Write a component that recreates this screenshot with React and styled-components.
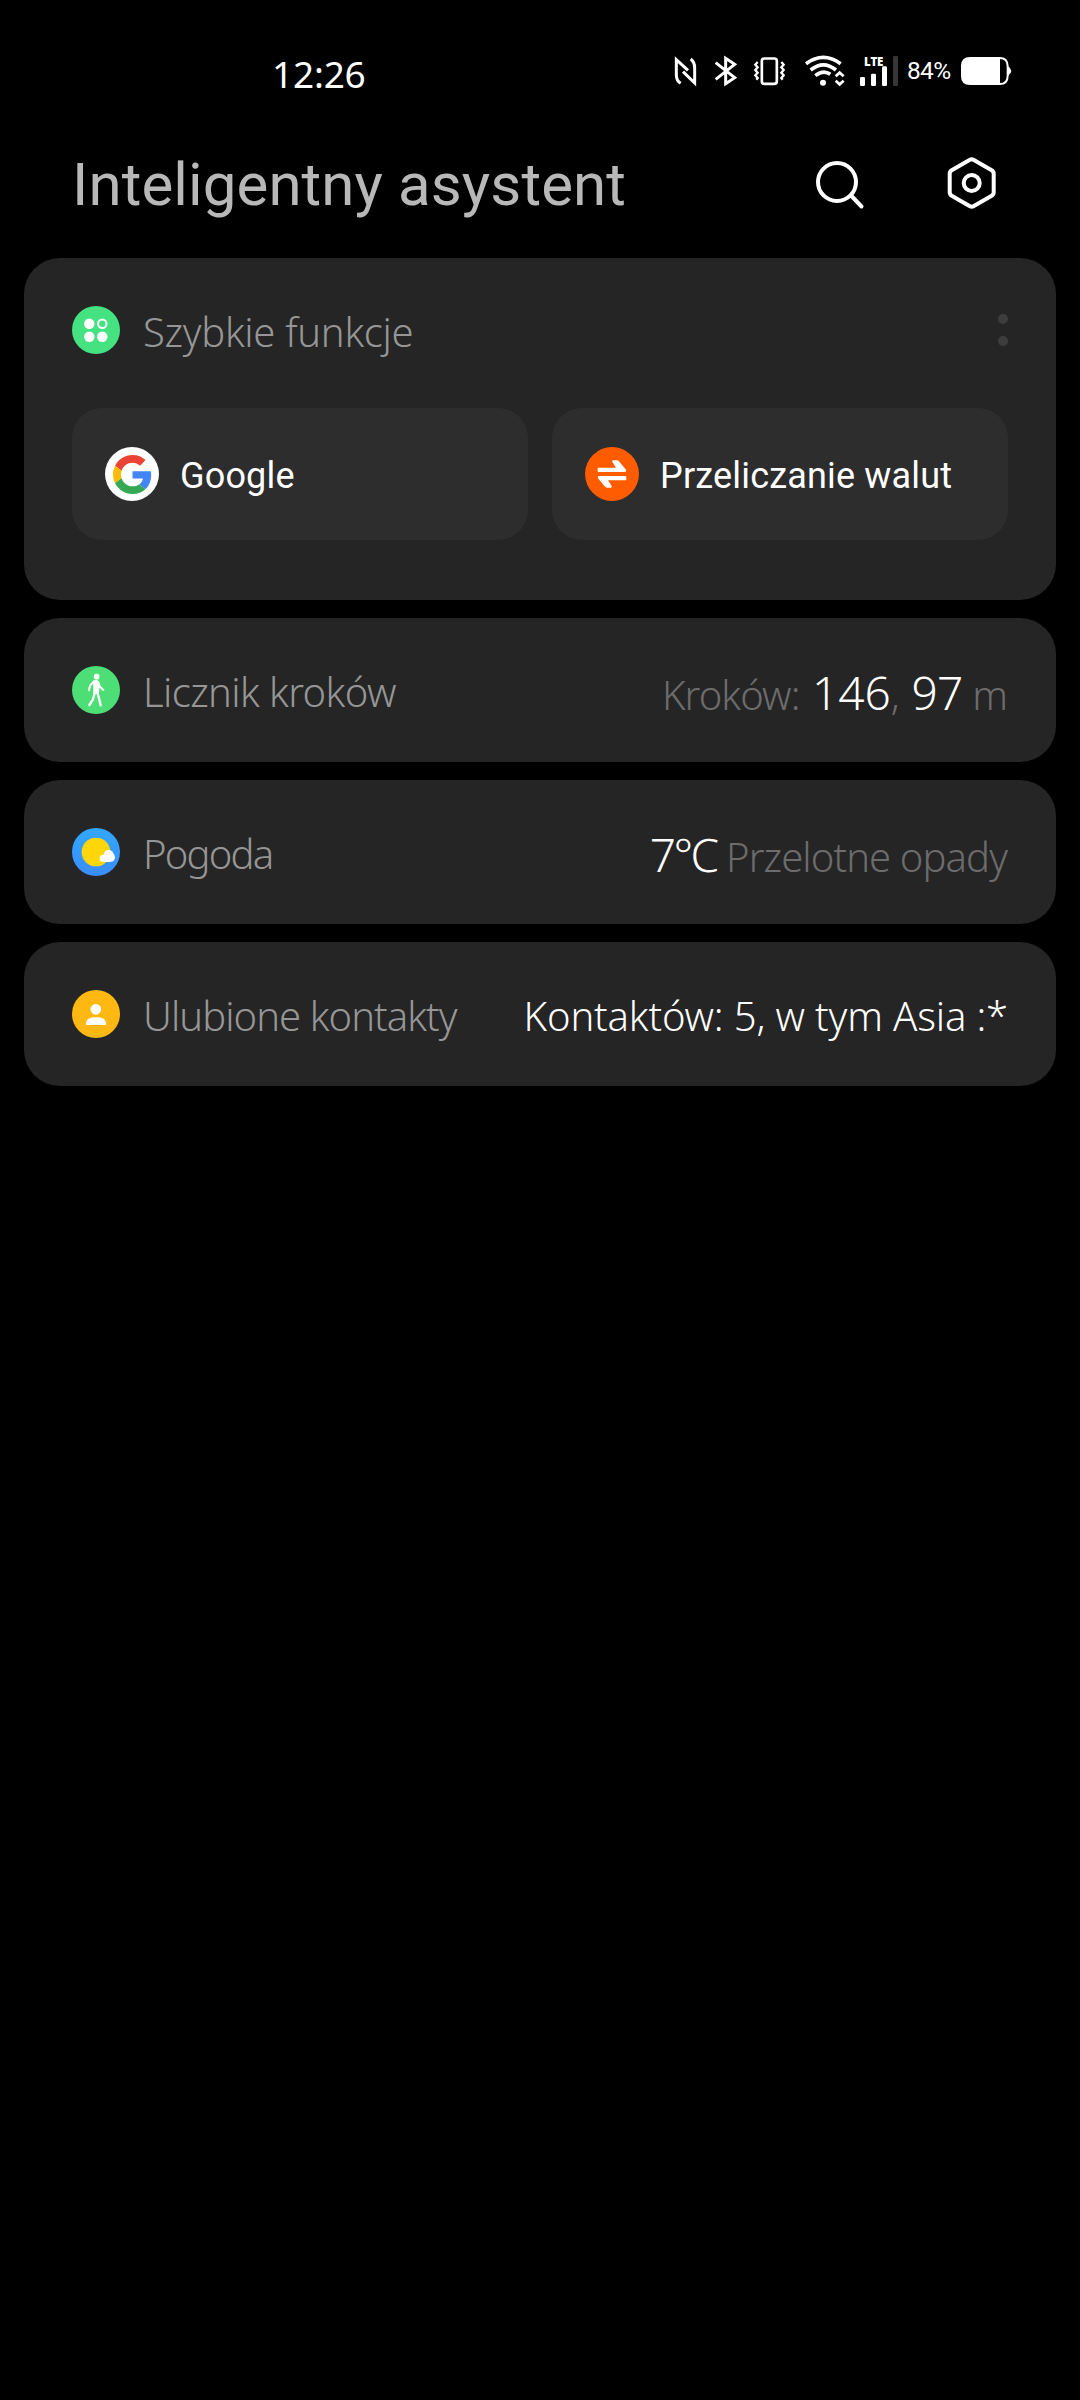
import React from 'react'
import styled, {createGlobalStyle} from 'styled-components'

const GlobalStyle = createGlobalStyle`
    * {
        box-sizing: border-box;
    }

    body {
        margin: 0;
        background: #000;
    }

    svg {
        display: block;
        flex: none;
    }
`;

const Screen = styled.div`
    width: 1080px;
    min-height: 2400px;
    padding: 0 24px;
    background: #000;
    color: #fff;
    font-family: "Noto Sans", sans-serif;
    white-space: nowrap;
`;

const StatusBar = styled.div`
    display: flex;
    align-items: center;
    justify-content: space-between;
    height: 142px;
    padding: 0 44px 0 248px;
`;

const Clock = styled.div`
    padding-top: 5px;
    font-size: 37px;
    line-height: 44px;
    letter-spacing: -0.2px;
`;

const StatusIcons = styled.div`
    display: flex;
    align-items: center;
`;

const StatusIcon = styled.svg.attrs(({w}) => ({
    width: w / 3,
    height: 32,
    viewBox: `0 0 ${w} 96`
}))`
    margin-left: ${({gap}) => gap}px;
    fill: none;
    stroke: #fff;
    stroke-width: 9;
`;

const Signal = styled.div`
    position: relative;
    margin-left: 13px;
`;

const NetworkType = styled.span`
    position: absolute;
    top: 1px;
    left: 5px;
    font: 800 11.5px/12px "Open Sans", sans-serif;
    letter-spacing: -0.2px;
`;

const BatteryLevel = styled.span`
    width: 44px;
    margin-left: 8px;
    font: 400 24.5px/32px Roboto, sans-serif;
    letter-spacing: -0.7px;
`;

const Header = styled.header`
    display: flex;
    align-items: center;
    justify-content: space-between;
    height: 84px;
    margin-bottom: 32px;
    padding: 0 52px 0 48px;
`;

const Title = styled.h1`
    margin: 0;
    padding-top: 2px;
    color: #b8b8b8;
    font: 400 60px/70px Roboto, sans-serif;
    letter-spacing: 0.1px;
`;

const Actions = styled.div`
    display: flex;
    gap: 68px;
`;

const ActionIcon = styled.svg`
    width: 64px;
    height: 64px;
    fill: none;
    stroke: #fff;
    stroke-width: 4;
    stroke-linecap: round;
    stroke-linejoin: round;
`;

const Cards = styled.main`
    display: flex;
    flex-direction: column;
    gap: 18px;
`;

const Card = styled.section`
    padding: ${({tall}) => tall ? '48px 48px 60px' : '48px'};
    border-radius: 36px;
    background: #252525;
`;

const CardRow = styled.div`
    display: flex;
    align-items: center;
    height: 48px;
`;

const CardIcon = styled.svg`
    width: 48px;
    height: 48px;
`;

const Label = styled.div`
    flex: 1;
    margin-left: 23px;
    padding-top: 3px;
    color: #969696;
    font-size: 40px;
    font-weight: 350;
    line-height: 48px;
    letter-spacing: ${({spacing}) => spacing || 0}px;
`;

const Value = styled.div`
    padding-top: ${({drop}) => drop || 0}px;
    padding-right: ${({muted}) => muted ? 1 : 0}px;
    color: ${({muted}) => muted ? '#6c6c6c' : '#fff'};
    font-size: 40px;
    font-weight: 350;
    line-height: 48px;
    letter-spacing: ${({spacing}) => spacing || 0}px;
`;

const Big = styled.span`
    margin-left: ${({indent}) => indent || 0}px;
    color: #fff;
    font-size: 46px;
    line-height: 1;
    letter-spacing: ${({spacing}) => spacing || 0}px;
`;

const More = styled.div`
    display: flex;
    flex-direction: column;
    gap: 12px;
`;

const Dot = styled.i`
    width: 10px;
    height: 10px;
    border-radius: 50%;
    background: #3d3d3d;
`;

const Chips = styled.div`
    display: grid;
    grid-template-columns: 1fr 1fr;
    gap: 24px;
    margin-top: 54px;
`;

const Chip = styled.div`
    display: flex;
    align-items: center;
    height: 132px;
    padding-left: 33px;
    border-radius: 30px;
    background: #2d2d2d;
`;

const ChipIcon = styled.span`
    display: flex;
    align-items: center;
    justify-content: center;
    width: 54px;
    height: 54px;
    border-radius: 50%;
    background: ${({color}) => color};
`;

const ChipText = styled.span`
    margin-left: 21px;
    padding-top: 3px;
    font: 400 36px/44px Roboto, sans-serif;
    letter-spacing: 0.18px;
`;

const StatusGroup = () => (
    <StatusIcons>
        <StatusIcon w={69}>
            <path d="M20 85 Q7 77 7 60 V14 L42 46 M50 12 Q62 21 62 38 V84 L27 50" strokeWidth="9"/>
        </StatusIcon>
        <StatusIcon w={72} gap={17}>
            <path d="M5 23 L62 68 L35 86 V10 L62 28 L5 73" strokeWidth="9"/>
        </StatusIcon>
        <StatusIcon w={99} gap={15}>
            <rect x="26.500" y="10.500" width="45" height="76" rx="8" strokeWidth="8"/>
            <path d="M14 21 L7 29 L14 37 L7 45 L14 53 L7 61 L14 69 L10 74 M85 21 L92 29 L85 37 L92 45 L85 53 L92 61 L85 69 L89 74" strokeWidth="7"/>
        </StatusIcon>
        <StatusIcon w={126} gap={18}>
            <path d="M6 26 Q58 -12 110 26" strokeWidth="11"/>
            <path d="M20 45 Q58 14 96 45" strokeWidth="11"/>
            <path d="M34 62 Q58 43 79 58" strokeWidth="11"/>
            <circle cx="57" cy="83" r="9" fill="#fff" stroke="none"/>
            <path d="M95 64 L107 53 L119 64 M95 77 L107 88 L119 77" strokeWidth="8"/>
        </StatusIcon>
        <Signal>
            <StatusIcon w={120}>
                <g fill="#fff" stroke="none">
                    <rect x="3" y="66" width="15" height="27" rx="4"/>
                    <rect x="36" y="56" width="15" height="37" rx="4"/>
                    <rect x="69" y="34" width="15" height="59" rx="4"/>
                    <rect x="102" y="3" width="15" height="90" rx="4" fill="#363636"/>
                </g>
            </StatusIcon>
            <NetworkType>LTE</NetworkType>
        </Signal>
        <BatteryLevel>84%</BatteryLevel>
        <StatusIcon w={153} gap={10}>
            <path d="M117 6 H27 Q0 6 0 32 V64 Q0 90 27 90 H117 Z" fill="#fff" stroke="none"/>
            <path d="M110 9 H116 Q140 9 140 34 V62 Q140 87 116 87 H110" strokeWidth="6"/>
            <path d="M141 34 Q151 40 151 48 Q151 56 141 62 Z" fill="#fff" stroke="none"/>
        </StatusIcon>
    </StatusIcons>
);

const QuickIcon = () => (
    <CardIcon viewBox="0 0 48 48">
        <circle cx="24" cy="24" r="24" fill="#45e282"/>
        <circle cx="17.300" cy="17.700" r="5.200" fill="#fff"/>
        <circle cx="30.300" cy="17.700" r="4.200" fill="none" stroke="#fff" strokeWidth="2"/>
        <circle cx="17.300" cy="30.700" r="5.200" fill="#fff"/>
        <circle cx="30.300" cy="30.700" r="5.200" fill="#fff"/>
    </CardIcon>
);

const StepsIcon = () => (
    <CardIcon viewBox="0 0 144 144">
        <circle cx="72" cy="72" r="72" fill="#4ddf76"/>
        <circle cx="74" cy="32" r="8.500" fill="#fff"/>
        <path d="M62 46 Q71 39 80 45 L83 60 L80 86 L72 82 L64 88 L64 60 Z" fill="#fff"/>
        <g fill="none" stroke="#fff" strokeWidth="6" strokeLinecap="round" strokeLinejoin="round">
            <path d="M65 47 L54 59 L51 73 M79 48 L83 61 L94 72"/>
            <path d="M68 80 L63 100 L52 117 M76 80 L81 97 L86 118" strokeWidth="7"/>
        </g>
    </CardIcon>
);

const WeatherIcon = () => (
    <CardIcon viewBox="0 0 144 144">
        <defs>
            <linearGradient id="sky" x1="0" y1="0" x2="0" y2="1">
                <stop offset="0" stopColor="#30a8ff"/>
                <stop offset="1" stopColor="#3b8cff"/>
            </linearGradient>
        </defs>
        <circle cx="72" cy="72" r="72" fill="url(#sky)"/>
        <circle cx="72" cy="72" r="43" fill="#ffd60a"/>
        <g fill="#fff">
            <circle cx="94" cy="91" r="11"/>
            <circle cx="110" cy="81" r="15"/>
            <circle cx="116" cy="88" r="13"/>
            <rect x="94" y="86" width="22" height="16"/>
        </g>
    </CardIcon>
);

const ContactsIcon = () => (
    <CardIcon viewBox="0 0 144 144">
        <circle cx="72" cy="72" r="72" fill="#ffb812"/>
        <circle cx="71.500" cy="58" r="16" fill="#fff"/>
        <path d="M42 105 V98 Q44 82 72 82 Q100 82 102 98 V105 Z" fill="#fff"/>
    </CardIcon>
);

const GoogleLogo = () => (
    <svg width="39" height="39" viewBox="0 0 48 48">
        <path fill="#ea4335" d="M24 9.500c3.540 0 6.710 1.220 9.210 3.600l6.850-6.850C35.900 2.380 30.470 0 24 0 14.620 0 6.510 5.380 2.560 13.220l7.980 6.190C12.430 13.720 17.740 9.500 24 9.500z"/>
        <path fill="#4285f4" d="M46.980 24.550c0-1.570-.150-3.090-.380-4.550H24v9.020h12.940c-.580 2.960-2.260 5.480-4.780 7.180l7.730 6c4.510-4.180 7.090-10.360 7.090-17.650z"/>
        <path fill="#fbbc05" d="M10.530 28.590c-.480-1.450-.760-2.990-.760-4.590s.270-3.140.760-4.590l-7.980-6.190C.920 16.460 0 20.120 0 24c0 3.880.920 7.540 2.560 10.780l7.970-6.190z"/>
        <path fill="#34a853" d="M24 48c6.480 0 11.930-2.130 15.890-5.810l-7.730-6c-2.150 1.450-4.920 2.300-8.160 2.300-6.260 0-11.570-4.220-13.470-9.910l-7.980 6.190C6.510 42.620 14.620 48 24 48z"/>
    </svg>
);

const ARROW = 'M-41 -19 H12 L1 -36 Q-1 -41 4 -41 H14 Q19 -41 22 -37 L41 -14 Q45 -6 38 -6 H-40 Q-43 -6 -43 -9 V-16 Q-43 -19 -41 -19 Z';

const ExchangeIcon = () => (
    <svg width="54" height="54" viewBox="-81 -81 162 162" fill="#fff">
        <path d={ARROW}/>
        <path d={ARROW} transform="rotate(180)"/>
    </svg>
);

export default function App() {
    return (
        <Screen>
            <GlobalStyle/>
            <StatusBar>
                <Clock>12:26</Clock>
                <StatusGroup/>
            </StatusBar>
            <Header>
                <Title>Inteligentny asystent</Title>
                <Actions>
                    <ActionIcon viewBox="0 0 64 64">
                        <circle cx="29" cy="30" r="19"/>
                        <path d="M43.500 44 L53.500 54.500"/>
                    </ActionIcon>
                    <ActionIcon viewBox="0 0 64 64">
                        <path d="M29.500 8 Q31.700 6.700 33.900 8 L51.700 18.300 Q53.700 19.500 53.700 21.800 V40.200 Q53.700 42.500 51.700 43.700 L33.900 54 Q31.700 55.300 29.500 54 L11.700 43.700 Q9.700 42.500 9.700 40.200 V21.800 Q9.700 19.500 11.700 18.300 Z"/>
                        <circle cx="31.700" cy="31" r="8"/>
                    </ActionIcon>
                </Actions>
            </Header>
            <Cards>
                <Card tall>
                    <CardRow>
                        <QuickIcon/>
                        <Label spacing={-0.3}>Szybkie funkcje</Label>
                        <More>
                            <Dot/>
                            <Dot/>
                        </More>
                    </CardRow>
                    <Chips>
                        <Chip>
                            <ChipIcon color="#fff"><GoogleLogo/></ChipIcon>
                            <ChipText>Google</ChipText>
                        </Chip>
                        <Chip>
                            <ChipIcon color="#ff5c00"><ExchangeIcon/></ChipIcon>
                            <ChipText>Przeliczanie walut</ChipText>
                        </Chip>
                    </Chips>
                </Card>
                <Card>
                    <CardRow>
                        <StepsIcon/>
                        <Label spacing={-0.6}>Licznik kroków</Label>
                        <Value muted drop={7} spacing={-0.9}>
                            Kroków: <Big indent={3}>146</Big>, <Big indent={3} spacing={-0.7}>97</Big> m
                        </Value>
                    </CardRow>
                </Card>
                <Card>
                    <CardRow>
                        <WeatherIcon/>
                        <Label spacing={-1.8}>Pogoda</Label>
                        <Value muted drop={7} spacing={-0.9}>
                            <Big spacing={-2.5}>7℃</Big> Przelotne opady
                        </Value>
                    </CardRow>
                </Card>
                <Card>
                    <CardRow>
                        <ContactsIcon/>
                        <Label spacing={-0.95}>Ulubione kontakty</Label>
                        <Value drop={3} spacing={-0.15}>Kontaktów: 5, w tym Asia :*</Value>
                    </CardRow>
                </Card>
            </Cards>
        </Screen>
    )
}
